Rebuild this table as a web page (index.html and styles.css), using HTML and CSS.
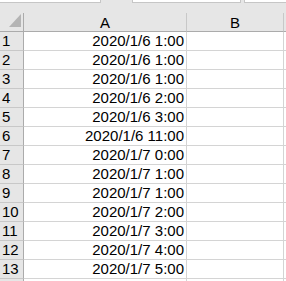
FILE: index.html
```html
<!DOCTYPE html>
<html>
<head>
<meta charset="utf-8">
<link rel="stylesheet" href="styles.css">
</head>
<body>
<div class="topbar">
  <div class="box box1"></div>
  <div class="box box2"></div>
  <div class="box box3"></div>
</div>
<div class="sheet">
  <div class="corner"><div class="tri"></div></div>
  <div class="colhead">A</div>
  <div class="colhead">B</div>
  <div class="colhead last"></div>

  <div class="rowhead">1</div><div class="cell num">2020/1/6 1:00</div><div class="cell"></div><div class="cell last"></div>
  <div class="rowhead">2</div><div class="cell num">2020/1/6 1:00</div><div class="cell"></div><div class="cell last"></div>
  <div class="rowhead">3</div><div class="cell num">2020/1/6 1:00</div><div class="cell"></div><div class="cell last"></div>
  <div class="rowhead">4</div><div class="cell num">2020/1/6 2:00</div><div class="cell"></div><div class="cell last"></div>
  <div class="rowhead">5</div><div class="cell num">2020/1/6 3:00</div><div class="cell"></div><div class="cell last"></div>
  <div class="rowhead">6</div><div class="cell num">2020/1/6 11:00</div><div class="cell"></div><div class="cell last"></div>
  <div class="rowhead">7</div><div class="cell num">2020/1/7 0:00</div><div class="cell"></div><div class="cell last"></div>
  <div class="rowhead">8</div><div class="cell num">2020/1/7 1:00</div><div class="cell"></div><div class="cell last"></div>
  <div class="rowhead">9</div><div class="cell num">2020/1/7 1:00</div><div class="cell"></div><div class="cell last"></div>
  <div class="rowhead">10</div><div class="cell num">2020/1/7 2:00</div><div class="cell"></div><div class="cell last"></div>
  <div class="rowhead">11</div><div class="cell num">2020/1/7 3:00</div><div class="cell"></div><div class="cell last"></div>
  <div class="rowhead">12</div><div class="cell num">2020/1/7 4:00</div><div class="cell"></div><div class="cell last"></div>
  <div class="rowhead">13</div><div class="cell num">2020/1/7 5:00</div><div class="cell"></div><div class="cell last"></div>
  <div class="rowhead"></div><div class="cell num"></div><div class="cell"></div><div class="cell last"></div>
</div>
</body>
</html>
```

FILE: styles.css
```css
html, body {
  margin: 0;
  padding: 0;
  background: #ffffff;
  overflow: hidden;
}
body {
  font-family: "Liberation Sans", Arial, sans-serif;
  font-size: 15px;
  color: #000;
  width: 286px;
  height: 281px;
}
.topbar {
  height: 13px;
  background: #e6e6e6;
  display: flex;
  align-items: flex-start;
}
.box {
  height: 2px;
  background: #fff;
  border: 1px solid #c6c6c6;
  border-top: none;
  box-sizing: content-box;
}
.box1 {
  width: 100px;
  border-left: none;
}
.box2 {
  width: 107px;
  margin-left: 31px;
}
.box3 {
  flex: 1;
  margin-left: 3px;
  border-right: none;
}
.sheet {
  display: grid;
  grid-template-columns: 24px 163px 97px 1fr;
  grid-auto-rows: 19px;
  height: 268px;
  overflow: hidden;
}
.sheet > div {
  box-sizing: border-box;
  line-height: 18px;
  white-space: nowrap;
  overflow: hidden;
}
.corner, .colhead {
  background: #e6e6e6;
  height: 19px;
  border-bottom: 1px solid #ababab;
  border-right: 1px solid #c8c8c8;
}
.corner {
  border-right: 1px solid #ababab;
  position: relative;
}
.tri {
  position: absolute;
  left: 9px;
  top: 1px;
  width: 0;
  height: 0;
  border-left: 12px solid transparent;
  border-bottom: 13px solid #b4b4b4;
}
.colhead {
  text-align: center;
  padding-top: 1px;
}
.colhead.last {
  border-right: none;
}
.rowhead {
  background: #e6e6e6;
  border-right: 1px solid #ababab;
  border-bottom: 1px solid #c8c8c8;
  padding-left: 2px;
}
.cell {
  border-right: 1px solid #d4d4d4;
  border-bottom: 1px solid #d4d4d4;
}
.cell.last {
  border-right: none;
}
.num {
  text-align: right;
  padding-right: 2px;
}
```
